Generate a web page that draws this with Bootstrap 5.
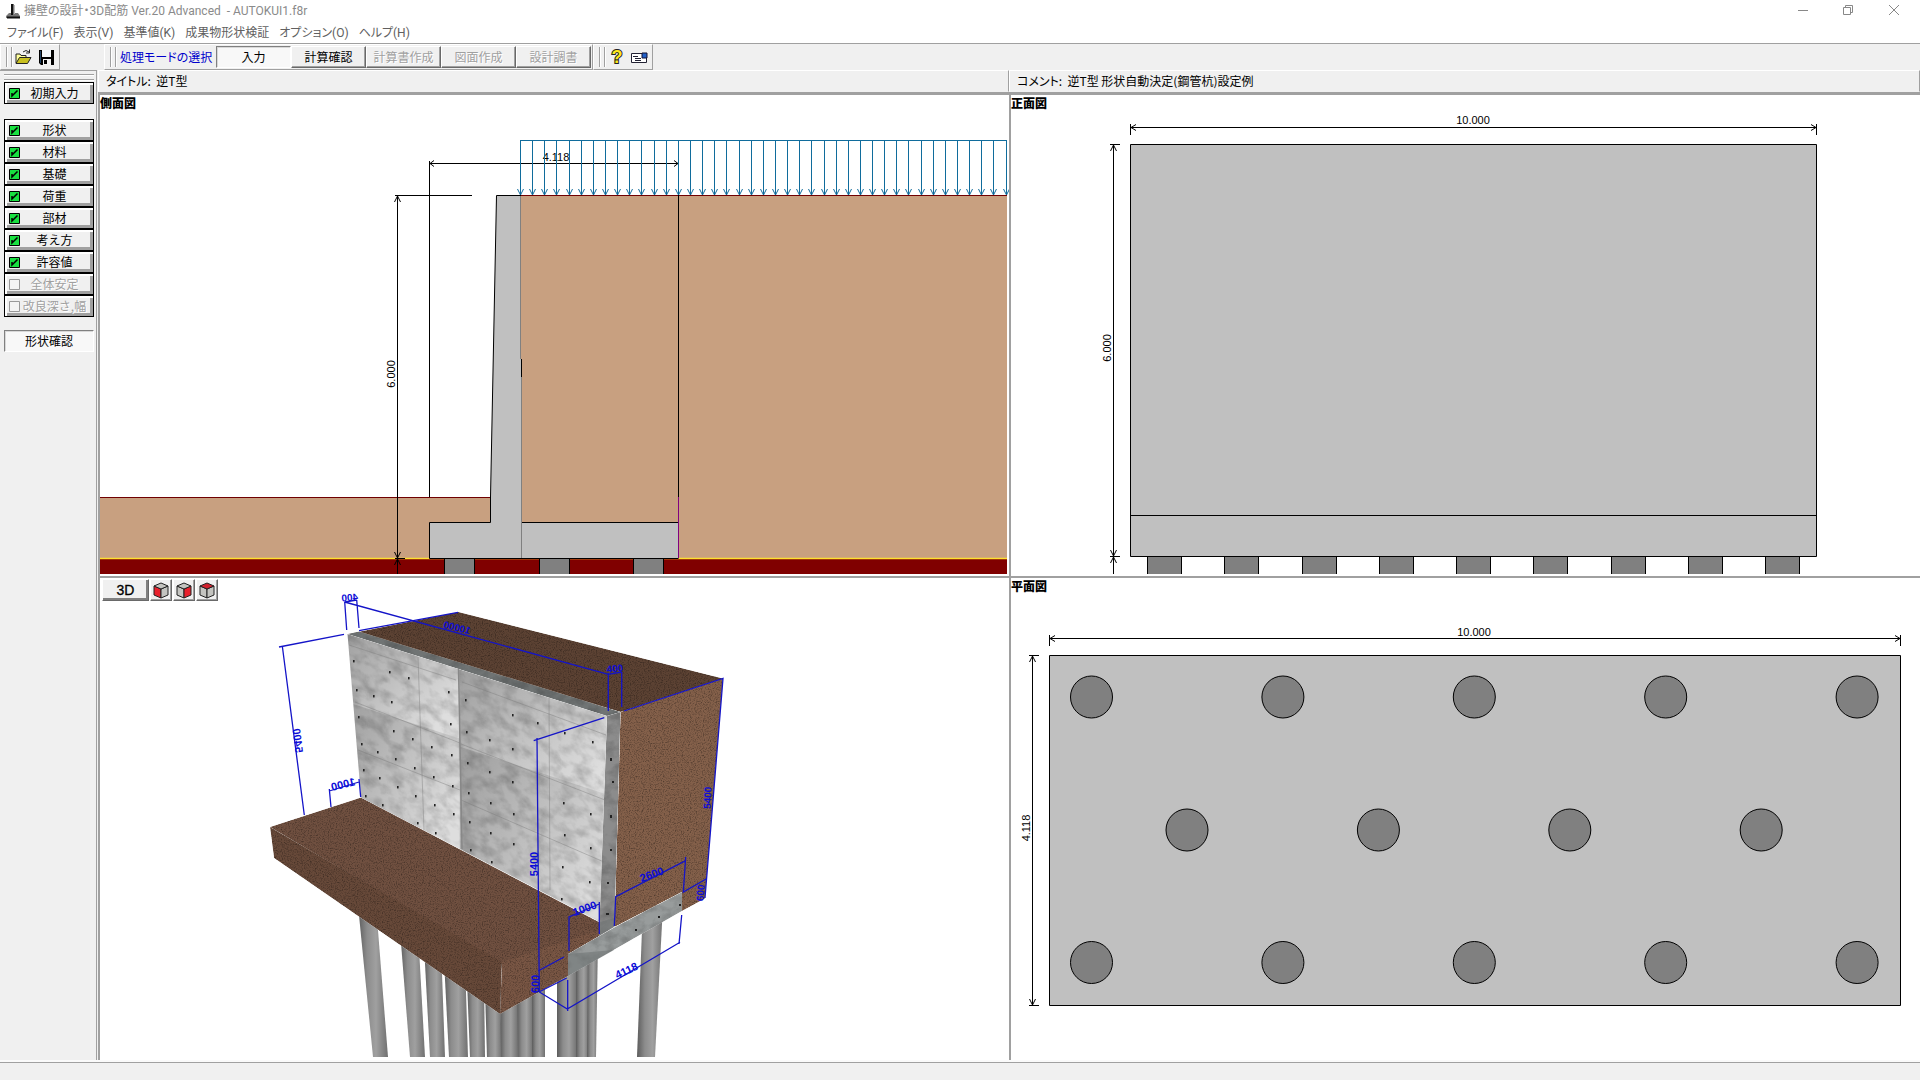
<!DOCTYPE html>
<html lang="ja">
<head>
<meta charset="utf-8">
<meta name="viewport" content="width=device-width, initial-scale=1">
<title>擁壁の設計・3D配筋 Ver.20 Advanced - AUTOKUI1.f8r</title>
<link href="https://cdn.jsdelivr.net/npm/bootstrap@5.3.0/dist/css/bootstrap.min.css" rel="stylesheet">
<script src="https://cdn.jsdelivr.net/npm/bootstrap@5.3.0/dist/js/bootstrap.bundle.min.js"></script>
<style>
  :root { --face:#f0f0f0; --edge:#a0a0a0; --deep:#808080; }
  body { font-family:"Noto Sans CJK JP","Liberation Sans",sans-serif; font-size:12px; line-height:16px; color:#000; background:var(--face); font-feature-settings:"palt"; overflow:hidden; }
  svg { display:block; }
  .titlebar, .menubar { font-family:Roboto,"Noto Sans CJK JP",sans-serif; }
  .titlebar { height:22px; background:#fff; color:#8a8a8a; padding-left:6px; }
  .titlebar h1 { font-size:12px; line-height:16px; font-weight:400; margin:0 0 0 4px; white-space:pre; }
  .wbtn { width:45px; height:22px; border:0; background:none; padding:0; }
  .menubar { height:21px; background:#fff; padding-left:7px; gap:10px; }
  .menubar a { color:#606060; text-decoration:none; white-space:nowrap; }
  .toolbar { height:27px; border-top:1px solid var(--edge); }
  .band { border:1px solid; border-color:#fff var(--edge) var(--edge) #fff; padding:0 1px 0 5px; }
  .grip { width:6px; height:20px; border:1px solid var(--edge); border-width:0 1px; box-shadow:inset 1px 0 #fff,1px 0 #fff; margin-right:4px; flex:none; }
  .grip.tight { margin-right:0; }
  .tool { border:0; background:none; padding:0; width:23px; height:22px; display:flex; align-items:center; justify-content:center; }
  .face { font-size:12px; line-height:16px; padding:0; border:1px solid; border-radius:0; background:var(--face); border-color:#fff #696969 #696969 #fff; box-shadow:inset -1px -1px var(--edge); color:#000; }
  .face:disabled { color:#a0a0a0; text-shadow:1px 1px #fff; }
  .face.pushed { background:#f8f8f8; border-color:var(--deep) #fff #fff var(--deep); box-shadow:inset 1px 1px #d8d8d8; }
  .mode { width:75px; height:22px; }
  .modelabel { color:#00c; width:96px; white-space:nowrap; }
  .filetools { width:60px; margin-right:44px; }
  .side { width:97px; margin-right:1px; flex:none; border:1px solid var(--edge); border-width:1px 1px 0 0; padding:3px 2px 0 4px; background:var(--face); }
  .hgrip { height:6px; border:1px solid var(--edge); border-width:1px 0; box-shadow:inset 0 1px #fff,0 1px #fff; margin-bottom:2px; }
  .step { height:22px; padding:0 4px 0 4px; border-top-color:#000; outline:1px solid #000; outline-offset:-1px; box-shadow:inset 2px 2px #fff,inset -3px -3px var(--edge); display:flex; align-items:center; width:90px; }
  .step svg { flex:none; }
  .step span { flex:1; text-align:center; white-space:nowrap; }
  .step:first-child { margin-bottom:15px; }
  .check { width:90px; height:22px; margin-top:13px; }
  .strip { height:22px; border:1px solid; border-color:#fff var(--edge) var(--face) #fff; padding:2px 0 0 7px; white-space:pre; }
  .views { display:grid; grid-template:minmax(0,1fr) minmax(0,1fr) / minmax(0,1fr) minmax(0,1fr); }
  .view { position:relative; background:#fff; border:solid var(--edge); border-width:2px 0 0 2px; min-width:0; min-height:0; }
  .view.upper { border-top-width:3px; }
  .view > svg { width:100%; height:100%; }
  .view h2 { position:absolute; left:0; top:0; margin:0; font-size:12px; line-height:15px; font-weight:900; }
  .viewtools { position:absolute; left:2px; top:1px; display:flex; gap:1px; }
  .viewtools .face { width:22px; height:22px; display:flex; align-items:center; justify-content:center; }
  .viewtools .wide { width:47px; font:14px "Liberation Sans",sans-serif; -webkit-text-stroke:.3px #000; box-shadow:inset -2px -2px var(--deep); }
  .status { height:20px; border-top:2px solid #fafafa; box-shadow:inset 0 1px var(--edge); background:var(--face); }
  .dim { fill:none; stroke:#000; }
  .num { font:11px "Liberation Sans",sans-serif; text-anchor:middle; }
  .blue { fill:none; stroke:#1414c8; stroke-width:1.3; }
  .bnum { font:bold 11px "Liberation Sans",sans-serif; text-anchor:middle; fill:#0c0cd8; }
  .bnum.far { font-size:10px; }
</style>
</head>
<body>
<div class="vh-100 d-flex flex-column">
  <header class="titlebar d-flex align-items-center">
    <svg width="14" height="16" viewBox="0 0 14 16"><path d="M5 1h3v9h4l2 3v2H0v-2l3-3h2z" fill="#777"/><path d="M6 1v11M1 14.500h13" stroke="#111" stroke-width="2"/><path d="M8.500 2v9" stroke="#bbb"/></svg>
    <h1>擁壁の設計・3D配筋 Ver.20 Advanced  - AUTOKUI1.f8r</h1>
    <div class="ms-auto d-flex pe-1">
      <button class="wbtn" aria-label="最小化"><svg width="45" height="22"><path d="M17 10.500h10" stroke="#888"/></svg></button>
      <button class="wbtn" aria-label="元に戻す"><svg width="45" height="22"><path d="M17.500 7.500h7v7h-7zM19.500 7.500v-2h7v7h-2" fill="none" stroke="#888"/></svg></button>
      <button class="wbtn" aria-label="閉じる"><svg width="45" height="22"><path d="M18 5l10 10M28 5l-10 10" stroke="#888"/></svg></button>
    </div>
  </header>
  <nav class="menubar d-flex align-items-center">
    <a href="#">ファイル(F)</a><a href="#">表示(V)</a><a href="#">基準値(K)</a><a href="#">成果物形状検証</a><a href="#">オプション(O)</a><a href="#">ヘルプ(H)</a>
  </nav>
  <div class="toolbar d-flex">
    <div class="band filetools d-flex align-items-center">
      <i class="grip tight"></i>
      <button class="tool" aria-label="開く"><svg width="17" height="16" viewBox="0 0 17 16"><path d="M1 14V5h4l1 1.500h5V9" fill="#ffff9c" stroke="#222"/><path d="M1 14.500L4.500 8.500H16L12.500 14.500z" fill="#c8c020" stroke="#222"/><path d="M8 3q3-3 6 0M14.500.500v3.500h-3.500" fill="none" stroke="#222"/></svg></button>
      <button class="tool" aria-label="保存"><svg width="15" height="15" viewBox="0 0 15 15"><path d="M0 0h15v15H2l-2-2z" fill="#000"/><path d="M3 0h9v7H3z" fill="#f4f8fa"/><path d="M4 9h8v6H4z" fill="#f4f4f4"/><path d="M5 10h3v4H5z"/><path d="M1 1h1v12H1z" fill="#246"/></svg></button>
    </div>
    <div class="band d-flex align-items-center">
      <i class="grip"></i>
      <span class="modelabel">処理モードの選択</span>
      <button class="face pushed mode">入力</button><button class="face mode">計算確認</button><button class="face mode" disabled>計算書作成</button><button class="face mode" disabled>図面作成</button><button class="face mode" disabled>設計調書</button>
    </div>
    <div class="band d-flex align-items-center">
      <i class="grip tight"></i>
      <button class="tool" aria-label="ヘルプ"><svg width="16" height="18"><text x="8" y="15" text-anchor="middle" font-family="Liberation Sans" font-weight="bold" font-size="18" fill="#ffe81a" stroke="#222" stroke-width="2" paint-order="stroke">?</text></svg></button>
      <button class="tool" aria-label="メール"><svg width="17" height="11" viewBox="0 0 17 11"><path d="M.500 1.500h15v9H.500z" fill="#fff" stroke="#223"/><path d="M2 4.500h5M4 6.500h6M4 8.500h6" stroke="#223"/><path d="M11 1h5v5h-5z" fill="#2060c8" stroke="#113"/></svg></button>
    </div>
  </div>
  <div class="d-flex flex-grow-1" style="min-height:0">
    <aside class="side">
      <div class="hgrip"></div>
      <div id="steps"></div>
      <button class="face pushed check d-block">形状確認</button>
    </aside>
    <main class="flex-grow-1 d-flex flex-column" style="min-width:0">
      <div class="d-flex">
        <div class="strip w-50">タイトル:  逆T型</div>
        <div class="strip w-50">コメント:  逆T型 形状自動決定(鋼管杭)設定例</div>
      </div>
      <div class="views flex-grow-1">
        <section class="view upper">
          <svg viewBox="100 95 909 481" id="sideView">
            <path d="M521 195H1007V559H521zM100 497H491V559H100z" fill="#c8a080"/>
            <path d="M100 559H1007V574H100z" fill="#800000"/>
            <path d="M100 558.500H1007" stroke="#ffe030" stroke-width="1.500"/>
            <path d="M100 497.500H491M520 195.500H1007" stroke="#700000"/>
            <path d="M445 559h29v15h-29zM540 559h29v15h-29zM634 559h29v15h-29z" fill="#808080"/>
            <path d="M444.500 559V574M474.500 574V559M539.500 559V574M569.500 574V559M633.500 559V574M663.500 574V559" stroke="#000"/>
            <path d="M496.500 195.500H521V522.500H678.500V558.500H429.500V522.500H490.500V497z" fill="#c0c0c0"/>
            <path d="M521 195.500H496.500L490.500 497V522.500H429.500V558.500H678.500M521 522.500H678.500M521.500 359V377" class="dim"/>
            <path d="M520.500 196V359M521.500 377V558" stroke="#808080"/>
            <path d="M678.500 497V558" stroke="#800080"/>
            <path d="M429.500 161V497M678.500 161V497M429.500 163.500H678.500M434 160.500L430 163.500 434 166.500M674 160.500L678 163.500 674 166.500M395 195.500H472M397.500 195V574M394.500 202L397.500 196 400.500 202M394.500 552L397.500 558 400.500 552M394.500 565L397.500 559 400.500 565M395 558.500H405" class="dim"/>
            <text class="num" x="556" y="161">4.118</text>
            <text class="num" transform="translate(395 374) rotate(-90)">6.000</text>
          </svg>
          <h2>側面図</h2>
        </section>
        <section class="view upper">
          <svg viewBox="1011 95 909 481" id="frontView">
            <path d="M1130.500 144.500H1816.500V556.500H1130.500zM1130.500 515.500H1816.500" fill="#c0c0c0" stroke="#000"/>
            <path d="M1130.500 124V135M1816.500 124V135M1130.500 127.500H1816.500M1136 124.500L1131 127.500 1136 130.500M1811 124.500L1816 127.500 1811 130.500M1113.500 144V574M1110 144.500H1120M1110 556.500H1120M1110.500 151L1113.500 145 1116.500 151M1110.500 550L1113.500 556 1116.500 550M1110.500 563L1113.500 557 1116.500 563" class="dim"/>
            <text class="num" x="1473" y="124">10.000</text>
            <text class="num" transform="translate(1111 348) rotate(-90)">6.000</text>
          </svg>
          <h2>正面図</h2>
        </section>
        <section class="view">
          <svg viewBox="100 578 909 482" id="solidView">
            <defs>
              <filter id="grain" x="0" y="0" width="100%" height="100%" color-interpolation-filters="sRGB">
                <feTurbulence type="fractalNoise" baseFrequency=".85" numOctaves="2" seed="4"/>
                <feColorMatrix values=".9 0 0 0 .5 .9 0 0 0 .5 .9 0 0 0 .5 0 0 0 0 1" result="n"/>
                <feBlend in="SourceGraphic" in2="n" mode="multiply"/>
                <feComposite in2="SourceGraphic" operator="in"/>
              </filter>
              <filter id="stain" x="0" y="0" width="100%" height="100%" color-interpolation-filters="sRGB">
                <feTurbulence type="fractalNoise" baseFrequency=".07 .09" numOctaves="5" seed="9"/>
                <feColorMatrix values=".4 0 0 0 .75 .4 0 0 0 .75 .4 0 0 0 .75 0 0 0 0 1" result="n"/>
                <feBlend in="SourceGraphic" in2="n" mode="multiply"/>
                <feComposite in2="SourceGraphic" operator="in"/>
              </filter>
              <linearGradient id="pipe"><stop offset="0" stop-color="#5c5c5c"/><stop offset=".3" stop-color="#8c8c8c"/><stop offset=".6" stop-color="#a0a0a0"/><stop offset="1" stop-color="#707070"/></linearGradient>
              <linearGradient id="panelTone" x2="1" y2=".5"><stop offset="0" stop-color="#9c9c9c"/><stop offset=".6" stop-color="#c4c4c4"/><stop offset="1" stop-color="#dedede"/></linearGradient>
              <clipPath id="wallFace"><path d="M347.500 634L607 716 600 922 361 797.500z"/></clipPath>
            </defs>
            <g id="piles" fill="url(#pipe)"></g>
            <g filter="url(#grain)">
              <path d="M347.500 634L458.500 612 723 678.500 620.500 712z" fill="#5c4233"/>
              <path d="M620.500 712L723 678.500 705 898.500 682 911V892L614.500 927z" fill="#84604a"/>
              <path d="M270 827L361 797.500 599 922V936L568 954 502 964z" fill="#705040"/>
              <path d="M270 827L502 962 500 1014 274 858z" fill="#674939"/>
              <path d="M502 962L599 930V936L568 954V976L500 1014z" fill="#795644"/>
            </g>
            <g clip-path="url(#wallFace)">
              <g transform="translate(347 634) skewY(18)" filter="url(#stain)">
                <path d="M-2 -8H112V70H-2z" fill="url(#panelTone)"/>
                <path d="M-2 68H114V192H-2z" fill="url(#panelTone)"/>
                <path d="M112 -8H264V90H112z" fill="url(#panelTone)"/>
                <path d="M113 76H264V240H113z" fill="url(#panelTone)"/>
              </g>
              <path d="M355 702L460 743M461 744L605 800M418 657L424 831M549 697L550 890M349 645L456 680M462 682L606 735M358 750L460 790M461 800L604 862" fill="none" stroke="#777" stroke-opacity=".4"/>
              <path d="M458.500 667L462 849" stroke="#888" stroke-width="1.500"/>
              <g id="ties" fill="#222"></g>
            </g>
            <g filter="url(#stain)">
              <path d="M347.500 634L359 631.500 620.500 712 607 716z" fill="#707474"/>
              <path d="M607 716L620.500 712 614.500 927 599 936z" fill="#8c8c8c"/>
              <path d="M568 954L615 927 682 892V911L568 976z" fill="#989c9c"/>
            </g>
            <path d="M568 954L599 936 614.500 926V918L600 922 599 936 568 954V976L614 950z" fill="#6e7272" fill-opacity=".55"/>
            <path d="M610 758h2v3h-2zM612 781h2v2h-2zM610 815h2v3h-2zM610 849h2v2h-2zM607 882h2v2h-2zM606 913h3v2h-3zM635 929h2v2h-2zM658 916h2v2h-2zM679 904h2v2h-2z" fill="#222"/>
            <path class="blue" d="M344.700 602L346.700 630M356.700 600L359 628M344.700 602L356.700 600M344.700 602L608.300 674.300 621.700 672M608.300 673V711M621.700 672V707M359 630.600L458 612.300M624 711L723 678.500 705 898M279 647L344 634.300M282.300 646L304.300 815M329.300 791L359 782M329.300 789L331 807M359 779L360.700 797M533.700 740.700L604.300 717.700M537 738L539.300 992 567.300 1009 680 942.300M538 971L564 957M539 992L566.700 978M567.700 980V1011M681.700 915L679 944M569 951V917L599.300 904M599.300 902V934M614.300 926L615.700 896.700 685.700 860.700M685.700 857L683.300 892 706 879"/>
            <text class="bnum far" transform="translate(350 601) scale(-1 1) rotate(5)">400</text>
            <text class="bnum far" transform="translate(456 631) scale(-1 1) rotate(-14)">10000</text>
            <text class="bnum far" transform="translate(615 672) rotate(-5)">400</text>
            <text class="bnum" transform="translate(294 741) scale(-1 1) rotate(-83)">5400</text>
            <text class="bnum" transform="translate(344 788) scale(-1 1) rotate(14)">1000</text>
            <text class="bnum" transform="translate(538 864) rotate(-90)">5400</text>
            <text class="bnum" transform="translate(586 912) rotate(-20)">1000</text>
            <text class="bnum" transform="translate(653 878) rotate(-20)">2600</text>
            <text class="bnum" transform="translate(628 974) rotate(-25)">4118</text>
            <text class="bnum" transform="translate(539 984) rotate(-88)">600</text>
            <text class="bnum far" transform="translate(711 798) rotate(-87)">5400</text>
            <text class="bnum far" transform="translate(704 893) rotate(-87)">600</text>
          </svg>
          <div class="viewtools">
            <button class="face wide">3D</button>
            <button class="face" aria-label="正面"><svg width="16" height="17" viewBox="0 0 16 17"><g stroke="#222" stroke-linejoin="round"><path d="M1 4l7 3v9l-7-3z" fill="#e8202c"/><path d="M15 4L8 7v9l7-3z" fill="#c4c4c0"/><path d="M8 1l7 3-7 3-7-3z" fill="#c4c4c0"/></g></svg></button>
            <button class="face" aria-label="側面"><svg width="16" height="17" viewBox="0 0 16 17"><g stroke="#222" stroke-linejoin="round"><path d="M1 4l7 3v9l-7-3z" fill="#c4c4c0"/><path d="M15 4L8 7v9l7-3z" fill="#e8202c"/><path d="M8 1l7 3-7 3-7-3z" fill="#c4c4c0"/></g></svg></button>
            <button class="face" aria-label="上面"><svg width="16" height="17" viewBox="0 0 16 17"><g stroke="#222" stroke-linejoin="round"><path d="M1 4l7 3v9l-7-3z" fill="#c4c4c0"/><path d="M15 4L8 7v9l7-3z" fill="#c4c4c0"/><path d="M8 1l7 3-7 3-7-3z" fill="#d0202c"/></g></svg></button>
          </div>
        </section>
        <section class="view">
          <svg viewBox="1011 578 909 482" id="planView">
            <path d="M1049.500 655.500H1900.500V1005.500H1049.500z" fill="#c0c0c0" stroke="#000"/>
            <path d="M1049.500 635V646M1900.500 635V646M1049.500 638.500H1900.500M1055 635.500L1050 638.500 1055 641.500M1895 635.500L1900 638.500 1895 641.500M1032.500 655V1006M1029 655.500H1039M1029 1005.500H1039M1029.500 662L1032.500 656 1035.500 662M1029.500 999L1032.500 1005 1035.500 999" class="dim"/>
            <text class="num" x="1474" y="636">10.000</text>
            <text class="num" transform="translate(1030 828) rotate(-90)">4.118</text>
          </svg>
          <h2>平面図</h2>
        </section>
      </div>
    </main>
  </div>
  <footer class="status"></footer>
</div>
<script>
  const NS = 'http://www.w3.org/2000/svg';
  function draw(parent, tag, attrs) {
    const el = document.createElementNS(NS, tag);
    for (const k in attrs) el.setAttribute(k, attrs[k]);
    parent.appendChild(el);
  }
  const $ = id => document.getElementById(id);

  // input steps
  const steps = [['初期入力', 1], ['形状', 1], ['材料', 1], ['基礎', 1], ['荷重', 1], ['部材', 1], ['考え方', 1], ['許容値', 1], ['全体安定', 0], ['改良深さ,幅', 0]];
  $('steps').innerHTML = steps.map(([name, done]) =>
    `<button class="face step"${done ? '' : ' disabled'}><svg width="11" height="11" viewBox="0 0 11 11">${done
      ? '<path d="M.500.500h10v10H.500z" fill="#18e040" stroke="#000"/><path d="M3 5v3L8.500 2.500" fill="none" stroke="#000" stroke-width="1.500"/>'
      : '<path d="M.500.500h10v10H.500z" fill="#f4f4f4" stroke="#999"/>'}</svg><span>${name}</span></button>`).join('');

  // surcharge load on the backfill
  let d = 'M520 140.500H1007';
  for (let i = 0; i <= 40; i++) {
    const x = Math.round(520 + i * 12.14) + .5;
    d += `M${x} 140V195M${x - 3} 189L${x} 195 ${x + 3} 189`;
  }
  draw($('sideView'), 'path', { d, fill: 'none', stroke: '#106c9c' });

  // front piles
  for (let i = 0; i < 9; i++) {
    const x = Math.round(1147 + i * 77.25);
    draw($('frontView'), 'rect', { x, y: 557, width: 35, height: 17, fill: '#808080' });
    draw($('frontView'), 'path', { d: `M${x + .5} 557v17M${x + 34.5} 557v17`, stroke: '#000' });
  }

  // plan piles
  [[1091.5, 697, 5], [1187, 830, 4], [1091.5, 962.5, 5]].forEach(([x0, cy, n]) => {
    for (let i = 0; i < n; i++) draw($('planView'), 'circle', { cx: x0 + i * 191.4, cy, r: 21, fill: '#808080', stroke: '#000' });
  });

  // piles of the solid model: top left, top right, top y, bottom left, bottom right
  [[358, 376, 905, 373, 388], [400, 418, 930, 410, 425], [424, 441, 945, 430, 445], [444, 465, 960, 449, 468], [467, 484, 980, 470, 485], [485, 500, 990, 487, 502], [500, 518, 990, 501, 518], [517, 533, 980, 518, 533], [532, 545, 970, 532, 545], [557, 577, 960, 557, 577], [576, 589, 950, 576, 588], [588, 598, 940, 587, 596], [643, 663, 905, 637, 655]]
    .forEach(([a, b, y, c, e]) => draw($('piles'), 'path', { d: `M${a} ${y}H${b}L${e} 1057H${c}z` }));

  // formwork tie holes
  [[353, 660], [389, 671], [408, 677], [448, 691], [356, 689], [373, 695], [391, 701], [450, 723], [358, 716], [393, 730], [412, 738], [431, 746], [451, 754], [361, 743], [377, 751], [395, 758], [414, 767], [433, 776], [452, 785], [363, 769], [379, 777], [397, 786], [415, 795], [434, 804], [453, 813], [365, 795], [382, 804], [417, 822], [435, 832], [465, 699], [512, 714], [537, 722], [564, 732], [592, 741], [466, 731], [489, 739], [512, 748], [467, 762], [489, 771], [512, 781], [563, 802], [590, 813], [468, 792], [490, 802], [513, 813], [564, 834], [590, 847], [469, 821], [490, 832], [513, 843], [562, 866], [589, 881], [470, 849], [491, 861], [561, 898]]
    .forEach(([x, y]) => draw($('ties'), 'rect', { x: x, y: y, width: 1.6, height: 2.4 }));
</script>
</body>
</html>
